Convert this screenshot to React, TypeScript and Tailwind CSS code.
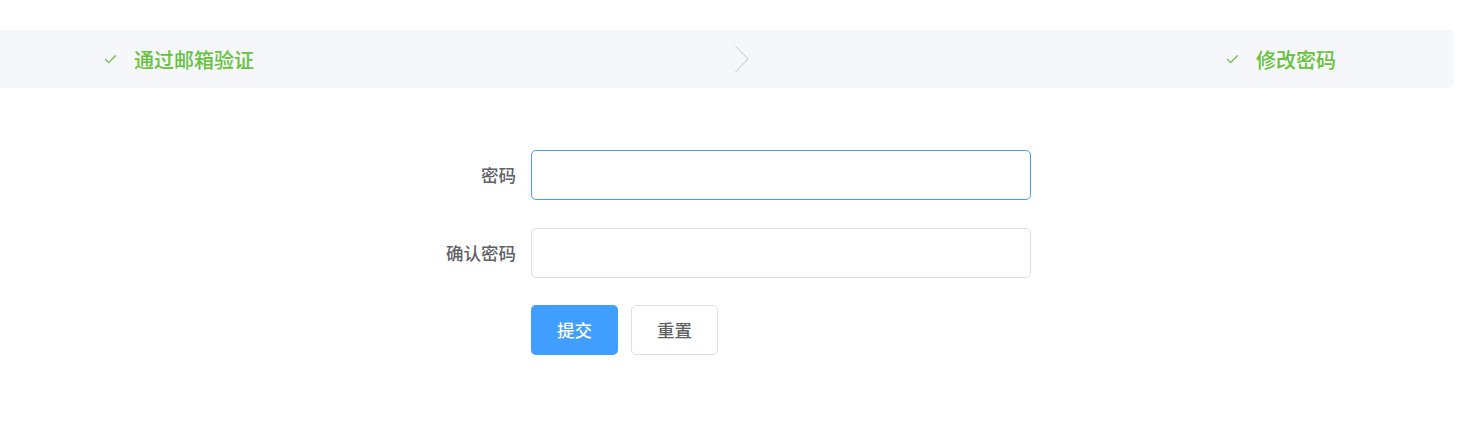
import { Check } from 'lucide-react';

const font = { fontFamily: '"Noto Sans CJK SC", "Noto Sans", sans-serif' };

function Step({ title }: { title: string }) {
  return (
    <div className="flex items-center">
      <Check size={15} strokeWidth={2} className="text-[#67c23a]" />
      <span className="ml-[16px] text-[20px] font-medium leading-[25px] text-[#67c23a]">{title}</span>
    </div>
  );
}

function Field({ label, focused }: { label: string; focused?: boolean }) {
  return (
    <div className="flex items-center">
      <label className="w-[125px] pr-[15px] text-right text-[17.5px] font-medium leading-[24px] text-[#606266]">
        {label}
      </label>
      <input
        type="password"
        className={
          'h-[50px] w-[500px] rounded-[5px] border bg-white px-[19px] outline-none ' +
          (focused ? 'border-[#409eff]' : 'border-[#dcdfe6]')
        }
      />
    </div>
  );
}

export default function App() {
  return (
    <div className="min-h-[446px] w-full bg-white pt-[30px]" style={font}>
      {/* steps */}
      <div className="flex h-[58px] w-[1454px] items-center rounded-r-[5px] bg-[#f5f7fa] pl-[103px]">
        <div className="flex w-[631px] items-center">
          <Step title="通过邮箱验证" />
        </div>
        <svg width="16" height="28" viewBox="0 0 16 28" className="shrink-0">
          <path d="M1.5 1 L14 14 L1.5 27" fill="none" stroke="#c0c4cc" strokeWidth="1" />
        </svg>
        <div className="ml-[475px] flex items-center">
          <Step title="修改密码" />
        </div>
      </div>

      {/* form */}
      <div className="ml-[406px] mt-[62px] flex flex-col">
        <Field label="密码" focused />
        <div className="mt-[28px]">
          <Field label="确认密码" />
        </div>
        <div className="mt-[27px] flex pl-[125px]">
          <button className="h-[50px] w-[87px] rounded-[5px] bg-[#409eff] text-[17.5px] font-medium text-white">
            提交
          </button>
          <button className="ml-[13px] h-[50px] w-[87px] rounded-[5px] border border-[#dcdfe6] bg-white text-[17.5px] font-medium text-[#606266]">
            重置
          </button>
        </div>
      </div>
    </div>
  );
}
